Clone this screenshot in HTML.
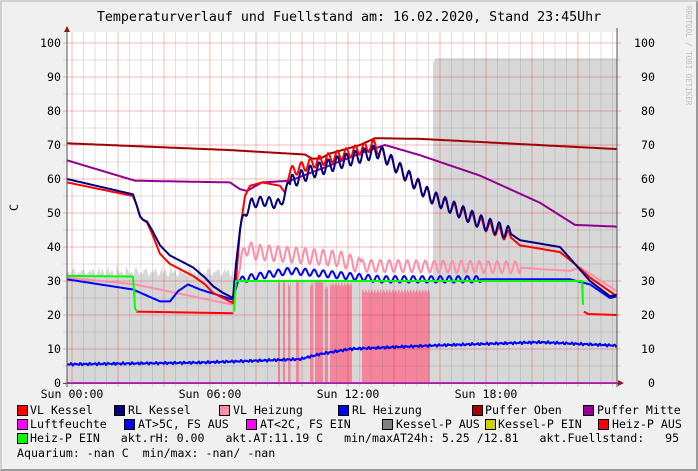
<!DOCTYPE html>
<html><head><meta charset="utf-8"><style>
html,body{margin:0;padding:0;background:#f0f0f0}
#c{position:relative;width:698px;height:471px;overflow:hidden;background:#f0f0f0;box-sizing:border-box;border-top:2px solid #d0d0d0;border-left:2px solid #d0d0d0;border-right:2px solid #9a9a9a;border-bottom:2px solid #9a9a9a}
svg{position:absolute;left:-2px;top:-2px}
.t{font-family:"DejaVu Sans Mono","Liberation Mono",monospace;font-size:11.6px;fill:#000}
pre{position:absolute;margin:0;font-family:"DejaVu Sans Mono","Liberation Mono",monospace;font-size:11.6px;line-height:14px;color:#000;white-space:pre}
.sw{position:absolute;width:9px;height:9px;border:1px solid #000}
</style></head><body><div id="c">
<svg width="698" height="471" xmlns="http://www.w3.org/2000/svg">
<text x="349" y="21" text-anchor="middle" font-family="DejaVu Sans Mono,Liberation Mono,monospace" font-size="13.3">Temperaturverlauf und Fuellstand am: 16.02.2020, Stand 23:45Uhr</text>
<text transform="translate(686,6) rotate(90)" font-family="DejaVu Sans Mono,monospace" font-size="7.5" fill="#c0c0c0">RRDTOOL / TOBI OETIKER</text>
<text transform="translate(18,211) rotate(-90)" class="t">C</text>
<rect x="67" y="32" width="550" height="351" fill="#fff"/>
<g id="fills"></g>
<g id="grid"></g>
<g id="lines" fill="none" stroke-width="2" stroke-linejoin="round"></g>
<line x1="67" y1="383" x2="617" y2="383" stroke="#ff00ff" stroke-width="2"/>
<line x1="67" y1="28" x2="67" y2="387" stroke="#555" stroke-width="1"/>
<line x1="617" y1="28" x2="617" y2="387" stroke="#555" stroke-width="1"/>
<line x1="63" y1="383.5" x2="620" y2="383.5" stroke="#555" stroke-width="1"/>
<path d="M64,32 L67,26 L70,32Z" fill="#8b1a1a"/>
<path d="M618,380 L624,383 L618,386Z" fill="#8b1a1a"/>
<g id="ylab" class="t"></g>
<g class="t" text-anchor="middle">
<text x="72" y="398">Sun 00:00</text><text x="210" y="398">Sun 06:00</text><text x="348" y="398">Sun 12:00</text><text x="486" y="398">Sun 18:00</text>
</g>
</svg>
<div class="sw" style="left:15px;top:403px;background:#ff0000"></div>
<div class="sw" style="left:112px;top:403px;background:#000080"></div>
<div class="sw" style="left:217px;top:403px;background:#ff8fa8"></div>
<div class="sw" style="left:336px;top:403px;background:#0000ff"></div>
<div class="sw" style="left:470px;top:403px;background:#a00000"></div>
<div class="sw" style="left:581px;top:403px;background:#900090"></div>
<div class="sw" style="left:15px;top:417px;background:#ff00ff"></div>
<div class="sw" style="left:122px;top:417px;background:#0000ff"></div>
<div class="sw" style="left:244px;top:417px;background:#ff00ff"></div>
<div class="sw" style="left:380px;top:417px;background:#808080"></div>
<div class="sw" style="left:483px;top:417px;background:#d0d000"></div>
<div class="sw" style="left:596px;top:417px;background:#ff0000"></div>
<div class="sw" style="left:15px;top:431px;background:#00ff00"></div>
<pre style="left:28px;top:401px">VL Kessel</pre>
<pre style="left:126px;top:401px">RL Kessel</pre>
<pre style="left:231px;top:401px">VL Heizung</pre>
<pre style="left:350px;top:401px">RL Heizung</pre>
<pre style="left:483px;top:401px">Puffer Oben</pre>
<pre style="left:595px;top:401px">Puffer Mitte</pre>
<pre style="left:28px;top:415px">Luftfeuchte</pre>
<pre style="left:136px;top:415px">AT&gt;5C, FS AUS</pre>
<pre style="left:258px;top:415px">AT&lt;2C, FS EIN</pre>
<pre style="left:394px;top:415px">Kessel-P AUS</pre>
<pre style="left:496px;top:415px">Kessel-P EIN</pre>
<pre style="left:610px;top:415px">Heiz-P AUS</pre>
<pre style="left:28px;top:429px">Heiz-P EIN   akt.rH: 0.00   akt.AT:11.19 C   min/maxAT24h: 5.25 /12.81   akt.Fuellstand:   95</pre>
<pre style="left:15px;top:444px">Aquarium: -nan C  min/max: -nan/ -nan</pre>
</div>
<script>
var NS="http://www.w3.org/2000/svg";
function Y(v){return 383-3.4*v;}
function el(p,tag,a){var e=document.createElementNS(NS,tag);for(var k in a)e.setAttribute(k,a[k]);p.appendChild(e);return e;}
function interp(pts,x){if(x<=pts[0][0])return pts[0][1];for(var i=1;i<pts.length;i++){if(x<=pts[i][0]){var a=pts[i-1],b=pts[i];return a[1]+(b[1]-a[1])*(x-a[0])/(b[0]-a[0]);}}return pts[pts.length-1][1];}
function line(pts,col,osc,noise){var d="";for(var x=67;x<=617;x+=1){var v=interp(pts,x);if(osc){for(var j=0;j<osc.length;j++){var o=osc[j];if(x>=o[0]&&x<=o[1])v+=o[2]*Math.sin(2*Math.PI*(x-o[0])/o[3]);}}if(noise)v+=noise*Math.sin(x*1.7)*Math.sin(x*0.37);d+=(x==67?"M":"L")+x+","+Y(v).toFixed(1);}el(document.getElementById("lines"),"path",{d:d,stroke:col});}
var F=document.getElementById("fills");
var d="M67,383";for(var x=67;x<=233;x++){var v=32.5+0.8*Math.sin(x*1.3)+0.6*Math.sin(x*0.7);if(x%9==0)v+=1.5;d+="L"+x+","+Y(v).toFixed(1);}
d+="L233,"+Y(30)+"L433,"+Y(30)+"L433,"+Y(94)+"L436,"+Y(95.5)+"L617,"+Y(95.5)+"L617,383Z";
el(F,"path",{d:d,fill:"#d7d7d7"});
var bars=[[278,280,30],[283,285,30],[288,290,29],[296,299,30],[310,313,29],[315,323,30],[325,328,28],[330,352,29],[362,430,27]];
bars.forEach(function(b){var dd="M"+b[0]+",383";for(var x=b[0];x<=b[1];x++){dd+="L"+x+","+Y(b[2]+0.8*Math.sin(x*2.1)).toFixed(1);}dd+="L"+b[1]+",383Z";el(F,"path",{d:dd,fill:"#f4849c"});});
var G=document.getElementById("grid");
for(var x=72-11.5;x<617;x+=11.5){if(x<67)continue;var maj=Math.round((x-72)/11.5)%4==0;el(G,"line",{x1:x.toFixed(1),y1:32,x2:x.toFixed(1),y2:387,stroke:maj?"rgba(230,0,0,0.28)":"rgba(120,120,120,0.22)","stroke-width":1});}
for(var v=0;v<=100;v+=5){var y=Y(v);el(G,"line",{x1:63,y1:y,x2:621,y2:y,stroke:v%10==0?"rgba(230,0,0,0.28)":"rgba(120,120,120,0.22)","stroke-width":1});}
var L=document.getElementById("ylab");
for(var v=0;v<=100;v+=10){var t=el(L,"text",{x:61,y:(Y(v)+4).toFixed(1),"text-anchor":"end"});t.textContent=v;var t2=el(L,"text",{x:655,y:(Y(v)+4).toFixed(1),"text-anchor":"end"});t2.textContent=v;}
line([[67,70.5],[230,68.5],[305,67.2],[312,66],[320,66],[330,67.5],[360,70],[375,72],[420,71.8],[617,68.8]],"#a00000");
line([[67,65.5],[135,59.5],[230,59],[240,57],[247,56.5],[262,59],[290,59.5],[330,64],[360,67.5],[385,70],[420,67],[480,61],[540,53],[575,46.5],[617,46]],"#900090");
line([[67,31],[135,29],[233,23],[237,30],[245,40],[255,38.5],[300,37.5],[340,36.5],[360,34.5],[520,34],[540,33.5],[570,33],[580,34],[617,27]],"#ff8fa8",[[240,360,2.3,9],[360,520,1.8,9]]);
line([[67,30.5],[133,27.5],[160,24],[170,24],[178,27],[188,29],[200,27.5],[233,24.5],[238,30],[250,31],[290,33],[330,32],[380,30.5],[570,30.5],[590,29],[610,25],[617,25.5]],"#0000ff",[[240,480,1,9]]);
line([[67,5.5],[200,6],[300,7],[320,8.5],[350,10],[430,11],[540,12],[617,11]],"#0000ff",null,0.4);
line([[67,59],[133,55],[137,52],[140,49],[143,48],[147,47.2],[152,44],[160,38],[170,35],[180,33.5],[193,31.5],[205,29],[213,26.5],[223,25],[233,23.5],[236,30],[240,45],[245,55],[250,58],[262,59],[280,58],[285,56],[290,62],[310,64.5],[340,67],[375,70],[380,68],[430,55],[480,47],[510,43],[520,40.5],[560,38.5],[575,35],[590,31],[617,25.5]],"#ff0000",[[290,510,1.6,9]]);
line([[67,60],[133,55.5],[137,52],[140,49],[143,48],[147,47.5],[152,45],[160,40.5],[170,37.5],[180,36],[193,34],[205,31],[213,28.5],[223,26.5],[233,25],[236,35],[240,45],[245,50],[252,53],[265,53.5],[280,52.5],[290,59],[310,62],[340,65],[375,68],[380,68],[430,55],[480,47.5],[510,44],[520,42],[560,40],[575,35],[590,30],[610,25.5],[617,26]],"#000080",[[240,290,1.5,9],[290,510,2,9]]);
var Ln=document.getElementById("lines");
el(Ln,"path",{d:"M136,"+Y(21)+"L233,"+Y(20.5)+" M584,"+Y(21)+"L588,"+Y(20.3)+"L617,"+Y(20),stroke:"#ff0000"});
el(Ln,"path",{d:"M67,"+Y(31.5)+"L133,"+Y(31.3)+"L135,"+Y(22)+"L137,"+Y(21)+" M234,"+Y(21)+"L236,"+Y(30)+"L582,"+Y(30)+"L583,"+Y(23),stroke:"#00ff00"});
</script>
</body></html>
